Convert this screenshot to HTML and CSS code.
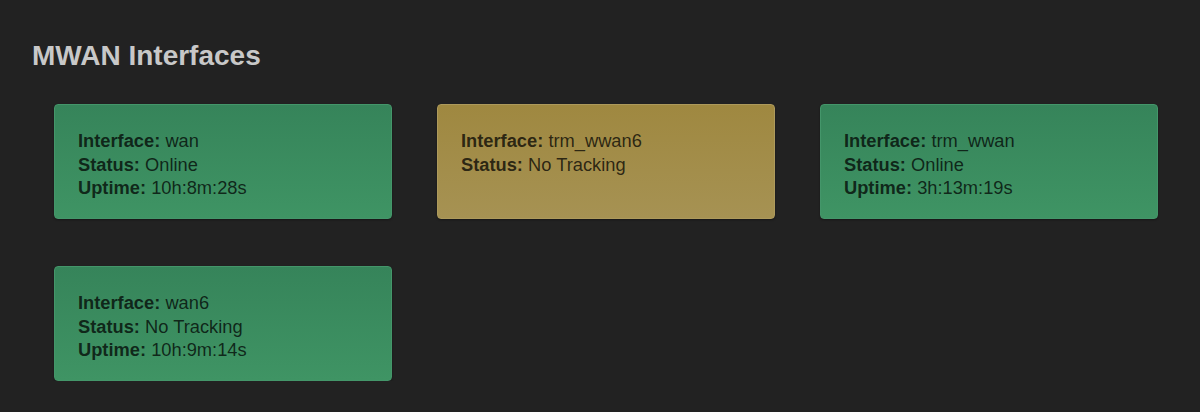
FILE: index.html
```html
<!DOCTYPE html>
<html lang="en">
<head>
<meta charset="utf-8">
<title>MWAN Interfaces</title>
<link rel="stylesheet" href="styles.css">
</head>
<body>
<section class="page">
  <h1 class="title">MWAN Interfaces</h1>
  <div class="grid">
    <div class="card card-online">
      <div><b>Interface:</b> wan</div>
      <div><b>Status:</b> Online</div>
      <div><b>Uptime:</b> 10h:8m:28s</div>
    </div>
    <div class="card card-warn">
      <div><b>Interface:</b> trm_wwan6</div>
      <div><b>Status:</b> No Tracking</div>
    </div>
    <div class="card card-online">
      <div><b>Interface:</b> trm_wwan</div>
      <div><b>Status:</b> Online</div>
      <div><b>Uptime:</b> 3h:13m:19s</div>
    </div>
    <div class="card card-online">
      <div><b>Interface:</b> wan6</div>
      <div><b>Status:</b> No Tracking</div>
      <div><b>Uptime:</b> 10h:9m:14s</div>
    </div>
  </div>
</section>
</body>
</html>
```
FILE: styles.css
```css
html, body {
  margin: 0;
  padding: 0;
  background: #222222;
  font-family: "Liberation Sans", Arial, Helvetica, sans-serif;
}
.page {
  padding: 39px 32px 0 32px;
}
.title {
  margin: 0;
  font-size: 28px;
  line-height: 34px;
  font-weight: bold;
  color: #c8c8c8;
}
.grid {
  margin-top: 31px;
  margin-left: 22px;
  display: grid;
  grid-template-columns: repeat(3, 338px);
  column-gap: 45px;
  row-gap: 47px;
}
.card {
  box-sizing: border-box;
  min-height: 115px;
  padding: 24px 23px 18px 23px;
  border-radius: 4px;
  font-size: 18.3px;
  line-height: 23.5px;
  color: rgba(0, 0, 0, 0.74);
  box-shadow: 0 1px 2px rgba(0, 0, 0, 0.35);
}
.card b {
  font-weight: bold;
}
.card-online {
  background: linear-gradient(to bottom, #36845a, #3f9464);
  border: 1px solid #44966a;
}
.card-warn {
  background: linear-gradient(to bottom, #9f8840, #a69253);
  border: 1px solid #ad9a5c;
}
```
